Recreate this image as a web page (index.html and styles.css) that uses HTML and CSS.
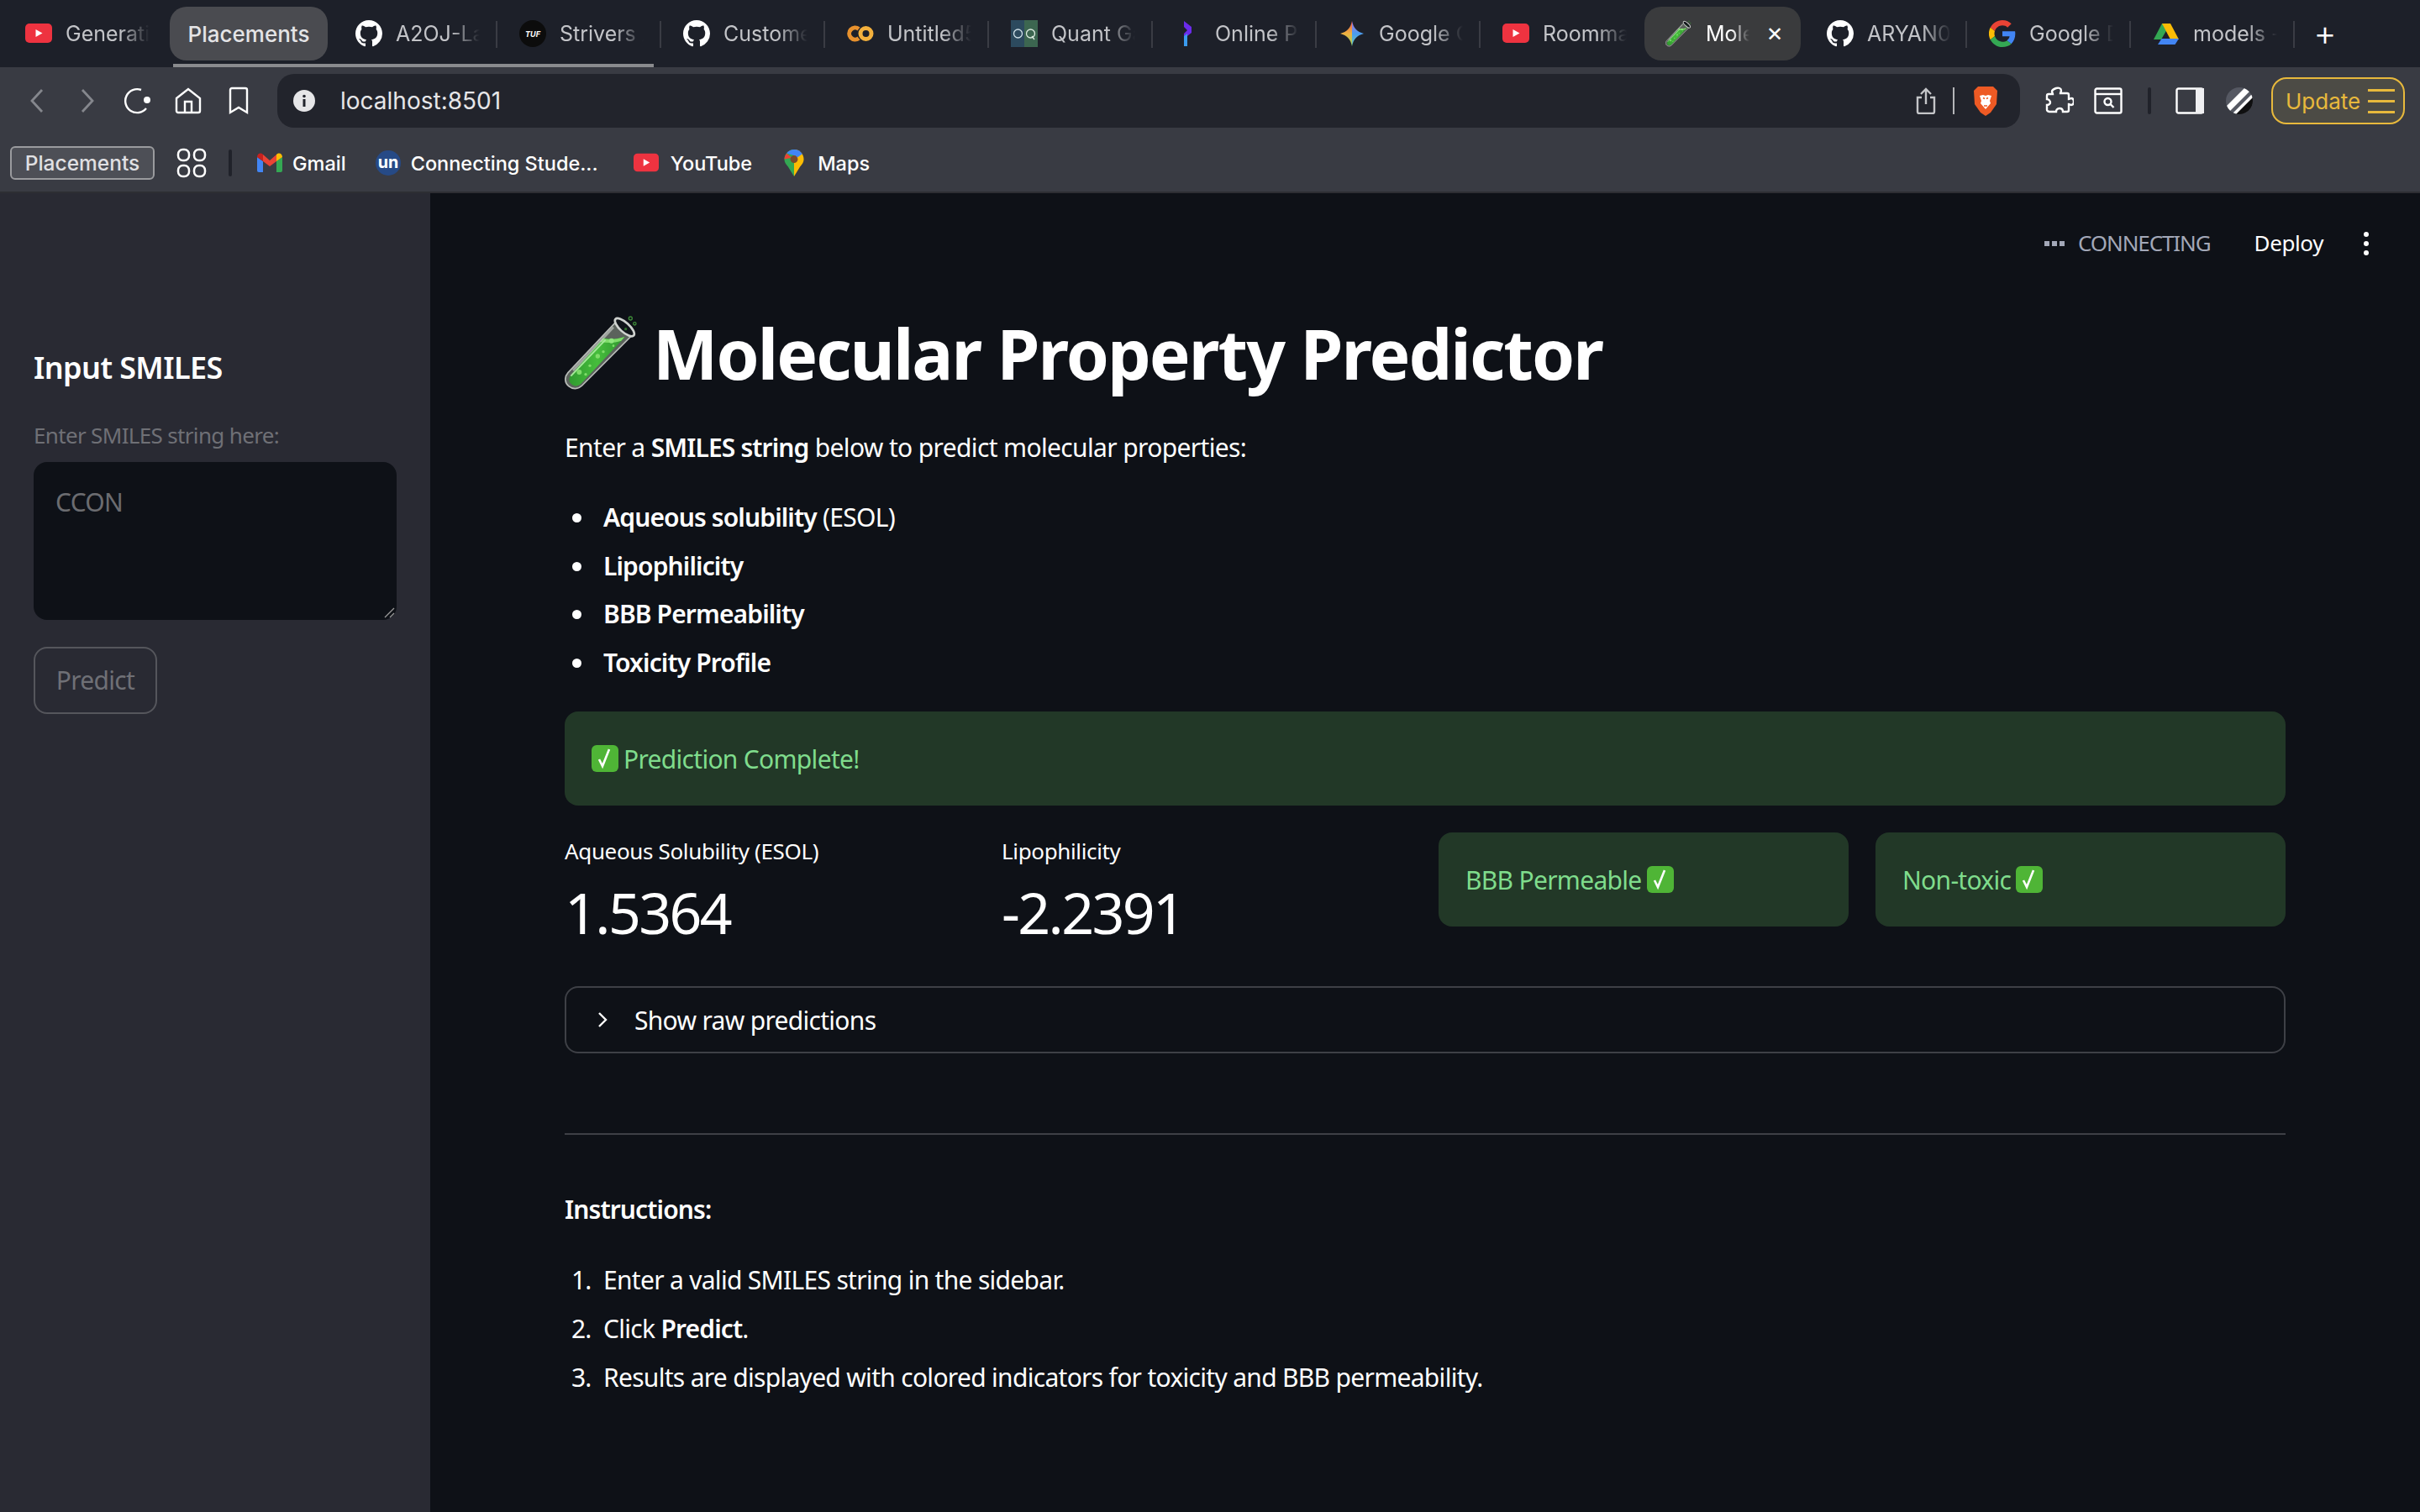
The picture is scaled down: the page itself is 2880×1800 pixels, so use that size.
FILE: index.html
```html
<!DOCTYPE html>
<html lang="en">
<head>
    <meta charset="UTF-8">
    <title>Molecular Property Predictor</title>
    <link rel="stylesheet" href="styles.css">
</head>
<body>

    <!-- shared icons -->
    <svg class="defs" width="0" height="0">
        <defs>
            <linearGradient id="liquid" x1="0" y1="0" x2="1" y2="0">
                <stop offset="0" stop-color="#2f9a2f"/>
                <stop offset=".5" stop-color="#46bd3c"/>
                <stop offset="1" stop-color="#2f9430"/>
            </linearGradient>
            <symbol id="gh" viewBox="0 0 16 16"><path fill="#fff" d="M8 0C3.58 0 0 3.58 0 8c0 3.54 2.29 6.53 5.47 7.59.4.07.55-.17.55-.38 0-.19-.01-.82-.01-1.49-2.01.37-2.53-.49-2.69-.94-.09-.23-.48-.94-.82-1.13-.28-.15-.68-.52-.01-.53.63-.01 1.08.58 1.23.82.72 1.21 1.87.87 2.33.66.07-.52.28-.87.51-1.07-1.78-.2-3.64-.89-3.64-3.95 0-.87.31-1.59.82-2.15-.08-.2-.36-1.02.08-2.12 0 0 .67-.21 2.2.82.64-.18 1.32-.27 2-.27.68 0 1.36.09 2 .27 1.53-1.04 2.2-.82 2.2-.82.44 1.1.16 1.92.08 2.12.51.56.82 1.27.82 2.15 0 3.07-1.87 3.75-3.65 3.95.29.25.54.73.54 1.48 0 1.07-.01 1.93-.01 2.2 0 .21.15.46.55.38A8.013 8.013 0 0016 8c0-4.42-3.58-8-8-8z"/></symbol>
            <symbol id="yt" viewBox="0 0 32 32"><rect y="4" width="32" height="23" rx="5" fill="#ee3340"/><path d="M12.500 11l8 4.500-8 4.500z" fill="#fff"/></symbol>
            <symbol id="tube" viewBox="40 40 270 270">
                <path d="M222 66L52 246c-14 16-12 36 2 48 14 12 34 12 48-2L285 108z" fill="#5b625c" stroke="#b9bcb9" stroke-width="5"/>
                <path d="M178 122c26 6 50 4 78-4L100 284c-12 12-26 12-36 3-10-9-10-24 0-35z" fill="url(#liquid)"/>
                <path d="M176 124c26 6 50 2 78-6l-12 14c-24 8-50 8-76 4z" fill="#7fdc6a"/>
                <path d="M62 258L186 128" stroke="#a5e89a" stroke-width="6" fill="none"/>
                <path d="M214 84L70 238" stroke="#d8dcd8" stroke-width="8" opacity=".55" fill="none"/>
                <circle cx="207" cy="132" r="9" fill="#8fe67e"/><circle cx="158" cy="187" r="8" fill="#7fdc6a"/><circle cx="178" cy="171" r="5" fill="#7fdc6a"/><circle cx="130" cy="221" r="5" fill="#7fdc6a"/><circle cx="92" cy="244" r="9" fill="#7fdc6a"/><circle cx="115" cy="252" r="5" fill="#7fdc6a"/><circle cx="214" cy="150" r="4" fill="#7fdc6a"/>
                <ellipse cx="254" cy="84" rx="44" ry="17" transform="rotate(42 254 84)" fill="#11151a" stroke="#cfd2cf" stroke-width="8"/>
                <circle cx="275" cy="52" r="6" fill="none" stroke="#3d8a38" stroke-width="4"/>
                <circle cx="290" cy="71" r="5" fill="none" stroke="#3d8a38" stroke-width="4"/>
                <circle cx="258" cy="90" r="5" fill="#2f6f2c"/>
            </symbol>
            <symbol id="check" viewBox="0 0 32 32"><rect width="32" height="32" rx="6" fill="#4fb536"/><path d="M9 17l4 8 8-20" fill="none" stroke="#fff" stroke-width="2.600"/></symbol>
        </defs>
    </svg>

    <!-- Tab strip -->
    <div class="tabstrip">
        <div class="tab"><svg class="fav"><use href="#yt"/></svg><span class="tab-title">Generati</span></div>
        <div class="group-chip">Placements</div>
        <div class="tab sep"><svg class="fav"><use href="#gh"/></svg><span class="tab-title">A2OJ-La</span></div>
        <div class="tab sep"><svg class="fav" viewBox="0 0 32 32"><circle cx="16" cy="16" r="16" fill="#0c0c0c"/><text x="16" y="19.500" class="tuf">TUF</text></svg><span class="tab-title">Strivers A</span></div>
        <div class="tab sep"><svg class="fav"><use href="#gh"/></svg><span class="tab-title">Custome</span></div>
        <div class="tab sep"><svg class="fav" viewBox="0 0 32 32"><path d="M14 10.500A7 7 0 1 0 14 21.500" fill="none" stroke="#e8912d" stroke-width="5"/><circle cx="22.500" cy="16" r="6.500" fill="none" stroke="#f4b13d" stroke-width="5"/></svg><span class="tab-title">Untitled5</span></div>
        <div class="tab sep"><svg class="fav" viewBox="0 0 32 32"><rect width="16" height="32" fill="#2c4a5e"/><rect x="16" width="16" height="32" fill="#3c6650"/><circle cx="8.500" cy="16" r="5" fill="none" stroke="#cfe0e8" stroke-width="1.300"/><circle cx="23.500" cy="16" r="5" fill="none" stroke="#dcebe0" stroke-width="1.300"/><path d="M25 19l3 4" stroke="#dcebe0" stroke-width="1.300"/></svg><span class="tab-title">Quant Ga</span></div>
        <div class="tab sep"><svg class="fav" viewBox="0 0 32 32"><path d="M11 1l9 7v7l-9 7v-6l4-4-4-4z" fill="#6b2bea"/><path d="M11 19l4-3v15h-4z" fill="#3a9bef"/></svg><span class="tab-title">Online P</span></div>
        <div class="tab sep"><svg class="fav" viewBox="0 0 32 32"><defs><linearGradient id="gem-l" x1="0" y1="0" x2="0" y2="1"><stop offset="0" stop-color="#e8574a"/><stop offset=".5" stop-color="#f0b340"/><stop offset="1" stop-color="#8fd06a"/></linearGradient><linearGradient id="gem-r" x1="0" y1="0" x2="0" y2="1"><stop offset="0" stop-color="#b36fd8"/><stop offset=".5" stop-color="#4a9cf0"/><stop offset="1" stop-color="#6cc7b0"/></linearGradient></defs><path d="M16 1c1.500 8 6 13 14 15-8 2-12.500 7-14 15z" fill="url(#gem-r)"/><path d="M16 1c-1.500 8-6 13-14 15 8 2 12.500 7 14 15z" fill="url(#gem-l)"/></svg><span class="tab-title">Google G</span></div>
        <div class="tab"><svg class="fav"><use href="#yt"/></svg><span class="tab-title">Roomma</span></div>
        <div class="tab active"><svg class="fav"><use href="#tube"/></svg><span class="tab-title">Mole</span><span class="tab-x">✕</span></div>
        <div class="tab sep"><svg class="fav"><use href="#gh"/></svg><span class="tab-title">ARYAN0</span></div>
        <div class="tab sep"><svg class="fav" viewBox="0 0 48 48"><path fill="#ea4335" d="M24 9.500c3.500 0 6.700 1.200 9.200 3.600l6.900-6.900C35.900 2.400 30.500 0 24 0 14.600 0 6.500 5.400 2.600 13.200l8 6.200C12.400 13.700 17.700 9.500 24 9.500z"/><path fill="#4285f4" d="M47 24.500c0-1.600-.1-3.100-.4-4.500H24v9h12.900c-.6 3-2.200 5.500-4.700 7.200l7.700 6C44.400 37.900 47 31.800 47 24.500z"/><path fill="#fbbc05" d="M10.500 28.600A14.500 14.500 0 0 1 10.500 19.400l-8-6.200a24 24 0 0 0 0 21.600z"/><path fill="#34a853" d="M24 48c6.500 0 11.900-2.100 15.900-5.800l-7.700-6c-2.200 1.500-4.900 2.300-8.200 2.300-6.300 0-11.600-4.200-13.500-9.900l-8 6.200C6.500 42.600 14.600 48 24 48z"/></svg><span class="tab-title">Google D</span></div>
        <div class="tab sep"><svg class="fav" viewBox="0 0 32 32"><path d="M11 3h10L10 22H1z" fill="#34a853" transform="translate(0 1)"/><path d="M21 4l10 19h-10L11 4z" fill="#fbbc05"/><path d="M6 29l4.500-7H31l-4.500 7z" fill="#4285f4"/></svg><span class="tab-title">models -</span></div>
        <div class="new-tab">+</div>
    </div>
    <div class="tabline"></div>

    <!-- Toolbar -->
    <div class="toolbar">
        <svg class="tb back" viewBox="0 0 16 30"><path d="M14 2L2 15l12 13" class="dim"/></svg>
        <svg class="tb fwd" viewBox="0 0 16 30"><path d="M2 2l12 13L2 28" class="dim"/></svg>
        <svg class="tb reload" viewBox="0 0 34 32"><path d="M27 25A14 14 0 1 1 21 3" class="line"/><circle cx="28" cy="15" r="4" fill="#fff"/></svg>
        <svg class="tb home" viewBox="0 0 32 32"><path d="M2 13L16 2l14 11v15a2 2 0 0 1-2 2H4a2 2 0 0 1-2-2z M12 30V17h8v13" class="line"/></svg>
        <svg class="tb mark" viewBox="0 0 24 34"><path d="M2 4a2 2 0 0 1 2-2h16a2 2 0 0 1 2 2v27l-10-6-10 6z" class="line"/></svg>
        <div class="urlbar">
            <svg class="info" viewBox="0 0 26 26"><circle cx="13" cy="13" r="13" fill="#e6e6e8"/><circle cx="13" cy="7.500" r="1.800" fill="#22242c"/><rect x="11.500" y="11" width="3" height="9" fill="#22242c"/></svg>
            <span class="url">localhost:8501</span>
            <svg class="share" viewBox="0 0 24 32"><path d="M7 12H2v17a2 2 0 0 0 2 2h16a2 2 0 0 0 2-2V12h-5 M12 20V2 M6 8l6-6 6 6" class="grey"/></svg>
            <span class="url-sep"></span>
            <svg class="brave" viewBox="0 0 30 36"><path d="M6 1h18l5 5-1 16-7 10-6 4-6-4-7-10L1 6z" fill="#ee5a24"/><path d="M8 12l4-1 3 1 3-1 4 1-2 6 1 3-6 7-6-7 1-3z" fill="#fff"/><path d="M12 14.500l2 1M18 14.500l-2 1M13 24h4" stroke="#ee5a24" stroke-width="1.500"/></svg>
        </div>
        <svg class="tb puzzle" viewBox="0 0 34 34"><path d="M13 2c3-1 6 0 6 3 0 1-1 2-1 3h8c1 0 2 1 2 2v5c1 0 2-1 3-1 2 0 3 2 3 4s-1 4-3 4c-1 0-2-1-3-1v7c0 1-1 2-2 2h-5c0-2-1-4-4-4s-4 2-4 4H5c-1 0-3-1-3-2v-6c2 0 4-1 4-3s-2-4-4-4v-4c0-1 1-2 2-2h5c0-1-1-2-1-3 0-2 2-3 5-4z" class="line"/></svg>
        <svg class="tb lens" viewBox="0 0 34 32"><rect x="1.500" y="1.500" width="31" height="29" rx="2" class="line"/><path d="M2 8h30" class="line"/><circle cx="16.500" cy="17" r="4" class="line"/><path d="M19.500 20l4 4" class="line"/></svg>
        <span class="tb-sep"></span>
        <svg class="tb panel" viewBox="0 0 34 32"><rect x="1.500" y="1.500" width="31" height="29" rx="2" class="line"/><rect x="24" y="1" width="10" height="30" fill="#f0f0f2"/></svg>
        <svg class="tb stripe" viewBox="0 0 32 32"><defs><clipPath id="circ"><circle cx="16" cy="16" r="16"/></clipPath></defs><g clip-path="url(#circ)"><rect width="32" height="32" fill="#555862"/><path d="M32 10L10 32h22z" fill="#0f0f10"/><path d="M25 -2L-2 25l5 5L30 3z" fill="#fff"/><path d="M33 6L6 33l3 2L35 9z" fill="#fff"/></g></svg>
        <div class="update">
            <span>Update</span>
            <span class="update-lines"><i></i><i></i><i></i></span>
        </div>
    </div>

    <!-- Bookmarks -->
    <div class="bookmarks">
        <div class="bm-group">Placements</div>
        <svg class="apps" viewBox="0 0 36 36"><g fill="none" stroke="#fff" stroke-width="2.500"><rect x="2" y="2" width="13" height="13" rx="5.500"/><rect x="21" y="2" width="13" height="13" rx="5.500"/><rect x="2" y="21" width="13" height="13" rx="5.500"/><rect x="21" y="21" width="13" height="13" rx="5.500"/></g></svg>
        <span class="bm-sep"></span>
        <div class="bm gmail"><svg class="bm-ico" viewBox="0 0 30 24"><path d="M0 5v16a2 2 0 0 0 2 2h5V10z" fill="#4285f4"/><path d="M30 5v16a2 2 0 0 1-2 2h-5V10z" fill="#34a853"/><path d="M7 10V2L15 9l8-7v8l-8 6z" fill="#ea4335"/><path d="M0 5c0-4 4-6 7-3v8z" fill="#c5221f"/><path d="M30 5c0-4-4-6-7-3v8z" fill="#fbbc04"/></svg>Gmail</div>
        <div class="bm un"><svg class="bm-ico" viewBox="0 0 32 32"><circle cx="16" cy="16" r="16" fill="#264a86"/><text x="16" y="22" class="un-txt">un</text></svg>Connecting Stude...</div>
        <div class="bm yt"><svg class="bm-ico"><use href="#yt"/></svg>YouTube</div>
        <div class="bm maps"><svg class="bm-ico pin" viewBox="0 0 26 36"><path d="M13 0a13 13 0 0 1 13 13c0 4-2 7-5 10l-8 13z" fill="#fbbc04"/><path d="M13 0A13 13 0 0 0 0 13c0 4 2 7 5 10l8 13V0z" fill="#34a853"/><path d="M3 5a13 13 0 0 1 10-5v8z" fill="#4285f4"/><path d="M13 0a13 13 0 0 1 11 6l-7 5-4-3z" fill="#4285f4"/><path d="M0 13a13 13 0 0 1 3-8l7 6z" fill="#ea4335"/><circle cx="13" cy="13" r="5" fill="#7a4a2a"/></svg>Maps</div>
    </div>

    <!-- App -->
    <div class="app">
        <div class="sidebar">
            <h2>Input SMILES</h2>
            <label>Enter SMILES string here:</label>
            <div class="textarea">CCON<svg class="grip" viewBox="0 0 14 14"><path d="M2 13L13 2M8 13l5-5" stroke="#9a9a9a" stroke-width="1.300"/></svg></div>
            <div class="predict">Predict</div>
        </div>

        <div class="main">
            <div class="st-header">
                <span class="dots"><i></i><i></i><i></i></span>
                <span class="conn">CONNECTING</span>
                <span class="deploy">Deploy</span>
                <span class="kebab"><i></i><i></i><i></i></span>
            </div>

            <h1><svg class="title-tube"><use href="#tube"/></svg>Molecular Property Predictor</h1>
            <p class="lead">Enter a <b>SMILES string</b> below to predict molecular properties:</p>
            <ul>
                <li><b>Aqueous solubility</b> (ESOL)</li>
                <li><b>Lipophilicity</b></li>
                <li><b>BBB Permeability</b></li>
                <li><b>Toxicity Profile</b></li>
            </ul>

            <div class="alert wide"><svg class="tick"><use href="#check"/></svg>Prediction Complete!</div>

            <div class="metrics">
                <div class="metric">
                    <div class="metric-label">Aqueous Solubility (ESOL)</div>
                    <div class="metric-value">1.5364</div>
                </div>
                <div class="metric">
                    <div class="metric-label">Lipophilicity</div>
                    <div class="metric-value">-2.2391</div>
                </div>
                <div class="alert">BBB Permeable <svg class="tick"><use href="#check"/></svg></div>
                <div class="alert">Non-toxic <svg class="tick"><use href="#check"/></svg></div>
            </div>

            <div class="expander">
                <svg class="chev" viewBox="0 0 12 20"><path d="M2 2l8 8-8 8" fill="none" stroke="#fff" stroke-width="2.400"/></svg>
                Show raw predictions
            </div>

            <hr>

            <p class="instr"><b>Instructions:</b></p>
            <ol>
                <li>Enter a valid SMILES string in the sidebar.</li>
                <li>Click <b>Predict</b>.</li>
                <li>Results are displayed with colored indicators for toxicity and BBB permeability.</li>
            </ol>
        </div>
    </div>

</body>
</html>
```

FILE: styles.css
```css
* {
    box-sizing: border-box;
}
html, body {
    margin: 0;
    height: 100%;
    overflow: hidden;
}
body {
    background: #0e1117;
    display: flex;
    flex-direction: column;
    font-family: "Inter", "Liberation Sans", sans-serif;
    color: #fff;
}
.defs {
    position: absolute;
}

/* tab strip */
.tabstrip {
    height: 76px;
    background: #1d2029;
    display: flex;
    align-items: flex-start;
    padding: 8px 0 0 4px;
    flex: none;
}
.tabline {
    height: 4px;
    background: linear-gradient(to right, #1d2029 206px, #8a8b8e 206px, #8a8b8e 778px, #1d2029 778px);
    flex: none;
}
.tab {
    width: 195px;
    height: 64px;
    display: flex;
    align-items: center;
    padding-left: 26px;
    font-size: 25px;
    color: #c3c4c8;
    position: relative;
    flex: none;
}
.tab.sep::after {
    content: "";
    position: absolute;
    right: 0;
    top: 17px;
    height: 32px;
    width: 2px;
    background: #3a3c44;
}
.fav {
    width: 32px;
    height: 32px;
    flex: none;
    margin-right: 16px;
}
.tab-title {
    width: 100px;
    overflow: hidden;
    white-space: nowrap;
    -webkit-mask-image: linear-gradient(to right, #000 65%, transparent);
    mask-image: linear-gradient(to right, #000 65%, transparent);
}
.group-chip {
    width: 188px;
    height: 64px;
    margin: 0 7px 0 3px;
    background: #4a4b50;
    border-radius: 20px;
    font-size: 26px;
    font-weight: 500;
    color: #e4e4e6;
    display: flex;
    align-items: center;
    justify-content: center;
    flex: none;
}
.tab.active {
    width: 186px;
    margin: 0 31px 0 0;
    background: #3a3b3d;
    border-radius: 20px;
    color: #fff;
    padding-left: 25px;
}
.tab.active .tab-title {
    width: 52px;
    -webkit-mask-image: linear-gradient(to right, #000 60%, transparent);
    mask-image: linear-gradient(to right, #000 60%, transparent);
}
.tab.active + .tab {
    padding-left: 0;
    width: 167px;
}
.tab-x {
    margin-left: 20px;
    font-size: 24px;
    color: #fff;
}
.new-tab {
    width: 60px;
    height: 64px;
    text-align: center;
    font-size: 42px;
    font-weight: 300;
    line-height: 62px;
    color: #fff;
    margin-left: 6px;
}
.tuf {
    font-size: 9px;
    font-style: italic;
    font-weight: 700;
    fill: #fff;
    text-anchor: middle;
}

/* toolbar */
.toolbar {
    height: 72px;
    background: #393b43;
    display: flex;
    align-items: center;
    padding-top: 8px;
    flex: none;
}
.line, .dim, .grey {
    fill: none;
    stroke: #fff;
    stroke-width: 2.400;
}
.dim {
    stroke: #85878d;
    stroke-width: 2.800;
}
.grey {
    stroke: #c4c5c8;
}
.tb {
    flex: none;
}
.back { width: 16px; height: 30px; margin-left: 36px; }
.fwd { width: 16px; height: 30px; margin-left: 44px; }
.reload { width: 34px; height: 32px; margin-left: 35px; }
.home { width: 32px; height: 32px; margin-left: 27px; }
.mark { width: 24px; height: 34px; margin-left: 32px; }
.urlbar {
    width: 2074px;
    height: 64px;
    margin-left: 34px;
    background: #22242c;
    border-radius: 20px;
    display: flex;
    align-items: center;
    padding-left: 19px;
}
.info {
    width: 26px;
    height: 26px;
}
.url {
    margin-left: 30px;
    font-size: 28px;
    color: #e6e6e8;
    flex: 1;
}
.share {
    width: 24px;
    height: 32px;
}
.url-sep {
    width: 2px;
    height: 32px;
    background: #b5b6b9;
    margin: 0 22px 0 20px;
}
.brave {
    width: 30px;
    height: 36px;
    margin-right: 26px;
}
.puzzle { width: 34px; height: 34px; margin-left: 30px; }
.lens { width: 34px; height: 32px; margin-left: 24px; }
.tb-sep {
    width: 4px;
    height: 32px;
    background: #20222a;
    border-radius: 2px;
    margin: 0 29px 0 30px;
}
.panel { width: 34px; height: 32px; }
.stripe { width: 32px; height: 32px; margin-left: 26px; }
.update {
    width: 159px;
    height: 56px;
    margin-left: 22px;
    border: 2px solid #e8b93c;
    border-radius: 18px;
    background: #4c4b45;
    color: #e8b93c;
    font-size: 26px;
    display: flex;
    align-items: center;
    padding-left: 15px;
    justify-content: space-between;
    padding-right: 10px;
}
.update-lines {
    width: 32px;
    display: flex;
    flex-direction: column;
    gap: 10px;
}
.update-lines i {
    display: block;
    height: 3px;
    background: #e8b93c;
}

/* bookmarks */
.bookmarks {
    height: 78px;
    background: #393b43;
    border-bottom: 2px solid #2d2e33;
    display: flex;
    align-items: center;
    padding: 8px 0 0 12px;
    font-size: 23.500px;
    font-weight: 500;
    flex: none;
}
.bm-group {
    width: 172px;
    height: 40px;
    border: 2px solid #9a9b9e;
    border-radius: 6px;
    background: #4d4f56;
    color: #e0e0e3;
    font-size: 24.500px;
    display: flex;
    align-items: center;
    justify-content: center;
}
.apps {
    width: 36px;
    height: 36px;
    margin-left: 26px;
}
.bm-sep {
    width: 4px;
    height: 32px;
    background: #20222a;
    border-radius: 2px;
    margin: 0 30px 0 26px;
}
.bm {
    display: flex;
    align-items: center;
}
.bm-ico {
    width: 30px;
    height: 32px;
    margin-right: 12px;
}
.un { margin-left: 35px; }
.yt { margin-left: 42px; }
.yt .bm-ico { margin-right: 14px; }
.maps { margin-left: 37px; }
.pin {
    width: 26px;
    margin-right: 15px;
}
.un-txt {
    font-size: 21px;
    font-weight: 700;
    fill: #fff;
    text-anchor: middle;
}

/* streamlit app */
.app {
    flex: 1;
    display: flex;
    font-family: "Noto Sans", sans-serif;
    font-size: 30px;
    letter-spacing: -0.700px;
    line-height: 51.200px;
}
.sidebar {
    width: 512px;
    background: #292a33;
    padding: 183px 40px 0;
    flex: none;
}
.sidebar h2 {
    font-size: 36px;
    font-weight: 600;
    letter-spacing: -0.600px;
    line-height: 50px;
    margin: 0 0 37px;
}
.sidebar label {
    display: block;
    font-size: 26px;
    letter-spacing: -0.660px;
    line-height: 36px;
    color: #6f7076;
    margin-bottom: 14px;
}
.textarea {
    width: 432px;
    height: 188px;
    background: #0e1117;
    border-radius: 16px;
    padding: 22px 26px;
    color: #6b6c70;
    position: relative;
}
.grip {
    position: absolute;
    right: 2px;
    bottom: 2px;
    width: 14px;
    height: 14px;
}
.predict {
    width: 147px;
    height: 80px;
    margin-top: 32px;
    border: 2px solid #55565c;
    border-radius: 16px;
    color: #6f7076;
    display: flex;
    align-items: center;
    justify-content: center;
}
.main {
    flex: 1;
    padding: 0 160px;
}
.st-header {
    height: 120px;
    margin-right: -99px;
    display: flex;
    align-items: center;
    justify-content: flex-end;
    font-size: 26px;
    letter-spacing: -0.400px;
}
.dots {
    display: flex;
    gap: 3px;
    margin-right: 16px;
}
.dots i {
    width: 6px;
    height: 6px;
    background: #a3a8b8;
}
.conn {
    color: #a3a8b8;
    letter-spacing: -1.100px;
}
.deploy {
    margin-left: 52px;
}
.kebab {
    display: flex;
    flex-direction: column;
    gap: 5px;
    margin-left: 48px;
}
.kebab i {
    width: 6px;
    height: 6px;
    border-radius: 50%;
    background: #fff;
}
h1 {
    font-size: 82px;
    font-weight: 700;
    letter-spacing: -1.950px;
    line-height: 106px;
    margin: 17px 0 0;
    white-space: nowrap;
    display: flex;
    align-items: center;
}
.title-tube {
    width: 90px;
    height: 90px;
    margin-right: 15px;
    flex: none;
}
p {
    margin: 0;
}
.lead {
    margin-top: 34px;
    letter-spacing: -0.640px;
}
b {
    font-weight: 600;
    letter-spacing: -0.880px;
}
ul, ol {
    padding-left: 46px;
}
ul {
    margin: 32px 0 0;
    list-style: none;
}
ol {
    margin: 33px 0 0;
}
li {
    margin-bottom: 6.400px;
    position: relative;
}
ul li::before {
    content: "";
    position: absolute;
    left: -37px;
    top: 21px;
    width: 11px;
    height: 11px;
    border-radius: 50%;
    background: #fff;
}
ol li::marker {
    content: counter(list-item) ".\2002";
}
.alert {
    background: #223827;
    color: #7fdc8c;
    border-radius: 16px;
    height: 112px;
    padding: 0 32px;
    display: flex;
    align-items: center;
    gap: 6px;
}
.wide {
    margin-top: 33px;
}
.tick {
    width: 32px;
    height: 32px;
    flex: none;
}
.metrics {
    display: grid;
    grid-template-columns: repeat(4, 1fr);
    gap: 32px;
    margin-top: 32px;
}
.metric-label {
    font-size: 26px;
    letter-spacing: -0.350px;
    line-height: 44px;
}
.metric-value {
    font-size: 68px;
    letter-spacing: -2.600px;
    line-height: 102px;
    font-weight: 400;
}
.expander {
    height: 80px;
    margin-top: 37px;
    border: 2px solid #3e4046;
    border-radius: 16px;
    display: flex;
    align-items: center;
    padding-left: 37px;
}
.chev {
    width: 12px;
    height: 20px;
    margin-right: 32px;
}
hr {
    border: none;
    height: 2px;
    background: #3e4046;
    margin: 95px 0 0;
}
.instr {
    margin-top: 63px;
}
```
